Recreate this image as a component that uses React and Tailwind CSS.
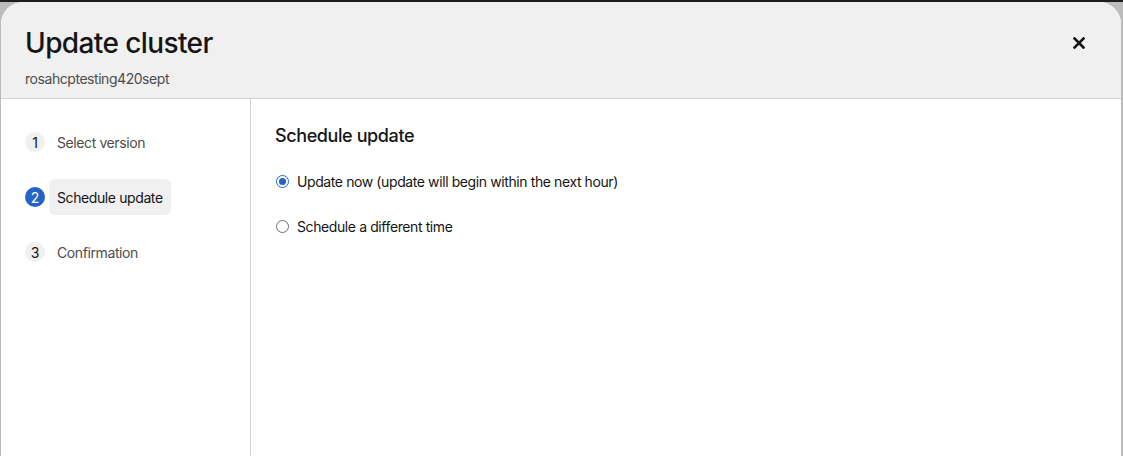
export default function App() {
  const steps = [
    { n: 1, label: "Select version" },
    { n: 2, label: "Schedule update", active: true },
    { n: 3, label: "Confirmation" },
  ];

  return (
    <div
      className="relative h-[456px] w-[1123px] overflow-hidden bg-[#bcbcbc] flex flex-col"
      style={{ fontFamily: "Inter, 'Noto Sans', sans-serif" }}
    >
      <div className="h-[2px] shrink-0 bg-[#1b1d21]" />
      <div className="flex-1 ml-[1px] mr-[2px] flex flex-col rounded-t-[22px] overflow-hidden bg-white">
        {/* header */}
        <div className="h-[97px] shrink-0 bg-[#f0f0f0] border-b border-[#d2d2d2] flex items-start justify-between pl-[24px] pr-[36px]">
          <div className="pt-[23px]">
            <h1 className="text-[28px] leading-[36px] font-medium text-[#151515] tracking-[-0.6px]">
              Update cluster
            </h1>
            <p className="mt-[8px] text-[14px] leading-[20px] text-[#4d4d4d] tracking-[-0.45px]">
              rosahcptesting420sept
            </p>
          </div>
          <button className="mt-[35px] text-[#151515]">
            <svg width="12" height="12" viewBox="0 0 12 12">
              <path d="M1.5 1.5 L10.5 10.5 M10.5 1.5 L1.5 10.5" stroke="currentColor" strokeWidth="2.6" strokeLinecap="square" />
            </svg>
          </button>
        </div>

        {/* body */}
        <div className="flex flex-1">
          <nav className="w-[250px] shrink-0 border-r border-[#d2d2d2] pt-[25px] pl-[24px] pr-[16px]">
            <ol className="flex flex-col gap-[19px]">
              {steps.map((s) => (
                <li key={s.n} className="flex items-center h-[36px]">
                  <span
                    className={
                      s.active
                        ? "w-[20px] h-[20px] rounded-full bg-[#2563c7] text-white text-[14px] flex items-center justify-center"
                        : "w-[20px] h-[20px] rounded-full bg-[#f0f0f0] text-[#151515] text-[14px] flex items-center justify-center"
                    }
                  >
                    {s.n}
                  </span>
                  <span
                    className={
                      s.active
                        ? "ml-[4px] px-[8px] h-[36px] flex items-center rounded-[6px] bg-[#f0f0f0] text-[14px] text-[#151515] tracking-[-0.4px]"
                        : "ml-[4px] px-[8px] h-[36px] flex items-center text-[14px] text-[#4d4d4d] tracking-[-0.4px]"
                    }
                  >
                    {s.label}
                  </span>
                </li>
              ))}
            </ol>
          </nav>

          <main className="flex-1 pt-[25px] pl-[24px]">
            <h2 className="text-[18px] leading-[24px] font-medium text-[#151515] tracking-[-0.4px]">Schedule update</h2>
            <div className="mt-[23px] flex flex-col gap-[24px] pl-[1px]">
              <label className="flex items-center gap-[8px] text-[14px] leading-[21px] text-[#151515] tracking-[-0.4px]">
                <span className="w-[13px] h-[13px] rounded-full border-[1.5px] border-[#2563c7] flex items-center justify-center">
                  <span className="w-[7px] h-[7px] rounded-full bg-[#2563c7]" />
                </span>
                Update now (update will begin within the next hour)
              </label>
              <label className="flex items-center gap-[8px] text-[14px] leading-[21px] text-[#151515] tracking-[-0.4px]">
                <span className="w-[13px] h-[13px] rounded-full border border-[#6a6e73]" />
                Schedule a different time
              </label>
            </div>
          </main>
        </div>
      </div>
    </div>
  );
}
